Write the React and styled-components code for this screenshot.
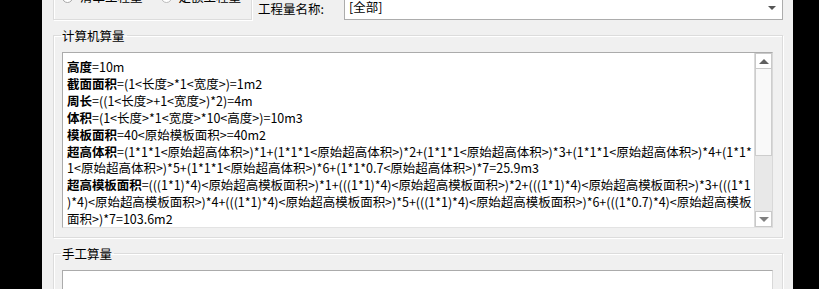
import React from "react";
import styled, { createGlobalStyle } from "styled-components";

const Global = createGlobalStyle`
  html, body { margin: 0; padding: 0; background: #000; overflow: hidden; }
  body { font-family: "Noto Sans CJK SC", "Microsoft YaHei", sans-serif; }
`;

const Window = styled.div`
  margin-left: 42px;
  width: 751px;
  height: 289px;
  background: #f0f0f0;
  padding: 0 10px 0 11px;
  box-sizing: border-box;
  overflow: hidden;
  font-size: 12.5px;
  color: #000;
`;

const TopRow = styled.div`
  display: flex;
  align-items: flex-end;
  height: 33px;
  margin-top: -13px;
`;

const RadioBox = styled.div`
  width: 199px;
  height: 33px;
  box-sizing: border-box;
  border: 1px solid #dcdcdc;
  border-top: none;
  box-shadow: inset 1px 0 0 #fff, 1px 1px 0 #fff;
  display: flex;
  align-items: flex-start;
  padding: 2px 0 0 8px;
  gap: 18px;
`;

const Radio = styled.label`
  display: flex;
  align-items: center;
  gap: 7px;
  height: 16px;
  line-height: 16px;
  color: #000;
`;

const RadioDot = styled.span`
  width: 11px;
  height: 11px;
  border-radius: 50%;
  border: 1px solid ${(p) => (p.$checked ? "#a8a8a8" : "#bcbcbc")};
  background: #fff;
  box-sizing: border-box;
  display: flex;
  align-items: center;
  justify-content: center;
  &::after {
    content: "";
    width: 5px;
    height: 5px;
    border-radius: 50%;
    background: ${(p) => (p.$checked ? "#a0a0a0" : "transparent")};
  }
`;

const FieldLabel = styled.span`
  width: 86px;
  padding-left: 6px;
  margin-bottom: 3px;
  line-height: 16px;
  white-space: nowrap;
`;

const Combo = styled.div`
  flex: 1;
  height: 25px;
  box-sizing: border-box;
  background: #fff;
  border: 1px solid #acacac;
  border-top: none;
  display: flex;
  align-items: center;
  padding: 0 4px 0 4px;
`;

const ComboText = styled.span`
  flex: 1;
  line-height: 16px;
`;

const ComboArrow = styled.span`
  width: 0;
  height: 0;
  border-left: 4px solid transparent;
  border-right: 4px solid transparent;
  border-top: 4px solid #555;
  margin-right: 2px;
  margin-top: 2px;
`;

const Group = styled.fieldset`
  margin: 6px 0 0 0;
  padding: 7px 9px 9px 8px;
  border: 1px solid #dcdcdc;
  box-shadow: inset 1px 1px 0 #fff, 1px 1px 0 #fff;
  min-width: 0;
  ${(p) => (p.$compact ? "padding-bottom: 0;" : "")}
`;

const Legend = styled.legend`
  padding: 0 2px 0 1px;
  margin-left: -1px;
  font-size: 12.5px;
  line-height: 19px;
  color: #000;
`;

const TextBox = styled.div`
  display: flex;
  height: ${(p) => p.$h}px;
  background: #fff;
  border: 1px solid #ababab;
  border-right-color: #d8d8d8;
  border-bottom-color: #e3e3e3;
  box-sizing: border-box;
`;

const Lines = styled.div`
  flex: 1;
  padding: 6px 0 0 4px;
  overflow: hidden;
  font-size: 12.5px;
  line-height: 16.9px;
`;

const Line = styled.div`
  white-space: nowrap;
  letter-spacing: ${(p) => p.$ls || 0}px;
`;

const Key = styled.b`
  font-weight: 700;
`;

const ScrollBar = styled.div`
  width: 17px;
  display: flex;
  flex-direction: column;
  background: #e8e8e8;
  border-left: 1px solid #dadada;
`;

const ScrollBtn = styled.div`
  height: 16px;
  box-sizing: border-box;
  background: #fff;
  border: 1px solid #c9c9c9;
  display: flex;
  align-items: center;
  justify-content: center;
  &::after {
    content: "";
    border-left: 5px solid transparent;
    border-right: 5px solid transparent;
    ${(p) =>
      p.$up
        ? "border-bottom: 5px solid #606060;"
        : "border-top: 5px solid #808080;"}
  }
`;

const Thumb = styled.div`
  height: 87px;
  background: #f9f9f9;
  border: 1px solid #cdcdcd;
  border-top: none;
  box-sizing: border-box;
`;

const Track = styled.div`
  flex: 1;
`;

const lines = [
  { parts: [["高度", "=10m"]] },
  { parts: [["截面面积", "=(1<长度>*1<宽度>)=1m2"]] },
  { parts: [["周长", "=((1<长度>+1<宽度>)*2)=4m"]] },
  { parts: [["体积", "=(1<长度>*1<宽度>*10<高度>)=10m3"]] },
  { parts: [["模板面积", "=40<原始模板面积>=40m2"]] },
  { parts: [["超高体积", "=(1*1*1<原始超高体积>)*1+(1*1*1<原始超高体积>)*2+(1*1*1<原始超高体积>)*3+(1*1*1<原始超高体积>)*4+(1*1*"]] },
  { parts: [[null, "1<原始超高体积>)*5+(1*1*1<原始超高体积>)*6+(1*1*0.7<原始超高体积>)*7=25.9m3"]] },
  { ls: -0.06, parts: [["超高模板面积", "=(((1*1)*4)<原始超高模板面积>)*1+(((1*1)*4)<原始超高模板面积>)*2+(((1*1)*4)<原始超高模板面积>)*3+(((1*1"]] },
  { ls: -0.04, parts: [[null, ")*4)<原始超高模板面积>)*4+(((1*1)*4)<原始超高模板面积>)*5+(((1*1)*4)<原始超高模板面积>)*6+(((1*0.7)*4)<原始超高模板"]] },
  { parts: [[null, "面积>)*7=103.6m2"]] },
];

export default function App() {
  return (
    <>
      <Global />
      <Window>
        <TopRow>
          <RadioBox>
            <Radio>
              <RadioDot $checked />
              清单工程量
            </Radio>
            <Radio>
              <RadioDot />
              定额工程量
            </Radio>
          </RadioBox>
          <FieldLabel>工程量名称:</FieldLabel>
          <Combo>
            <ComboText>[全部]</ComboText>
            <ComboArrow />
          </Combo>
        </TopRow>

        <Group>
          <Legend>计算机算量</Legend>
          <TextBox $h={176}>
            <Lines>
              {lines.map((l, i) => (
                <Line key={i} $ls={l.ls}>
                  {l.parts.map(([k, v], j) => (
                    <React.Fragment key={j}>
                      {k && <Key>{k}</Key>}
                      {v}
                    </React.Fragment>
                  ))}
                </Line>
              ))}
            </Lines>
            <ScrollBar>
              <ScrollBtn $up />
              <Thumb />
              <Track />
              <ScrollBtn />
            </ScrollBar>
          </TextBox>
        </Group>

        <Group $compact>
          <Legend>手工算量</Legend>
          <TextBox $h={40} />
        </Group>
      </Window>
    </>
  );
}
